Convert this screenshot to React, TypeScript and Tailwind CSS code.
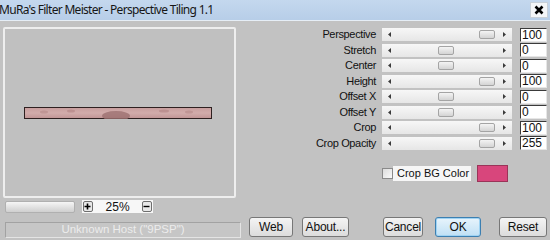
import React from "react";

const rows = [
  { label: "Perspective", max: true, value: "100" },
  { label: "Stretch", max: false, value: "0" },
  { label: "Center", max: false, value: "0" },
  { label: "Height", max: true, value: "100" },
  { label: "Offset X", max: false, value: "0" },
  { label: "Offset Y", max: false, value: "0" },
  { label: "Crop", max: true, value: "100" },
  { label: "Crop Opacity", max: true, value: "255" },
];

function Track({ max }: { max: boolean }) {
  return (
    <div className="relative w-[130px] h-[13px] bg-gradient-to-b from-[#f7f7f7] to-[#e6e6e6] flex items-center justify-between px-[6px]">
      <svg width="3" height="5" viewBox="0 0 3 5"><path d="M3 0 L0 2.5 L3 5 Z" fill="#3a3a3a" /></svg>
      <svg width="3" height="5" viewBox="0 0 3 5"><path d="M0 0 L3 2.5 L0 5 Z" fill="#3a3a3a" /></svg>
      <div
        className={
          "absolute top-[2px] w-[16px] h-[9px] rounded-[2px] border border-[#a4a4a4] bg-gradient-to-b from-[#f4f4f4] to-[#d4d4d4] " +
          (max ? "left-[97px]" : "left-[56px]")
        }
      />
    </div>
  );
}

function Btn({ children, ok, w }: { children: React.ReactNode; ok?: boolean; w: string }) {
  return (
    <div
      className={
        "h-[20px] flex items-center justify-center rounded-[3px] border text-[12px] text-[#111] tracking-[-0.2px] " +
        w +
        " " +
        (ok
          ? "border-[#3c7fb1] bg-gradient-to-b from-[#e8f4fc] to-[#bfe0f5] shadow-[inset_0_0_0_1px_#9fd3f3]"
          : "border-[#777] bg-gradient-to-b from-[#f4f4f4] to-[#dcdcdc]")
      }
    >
      {children}
    </div>
  );
}

export default function App() {
  return (
    <div
      className="w-[550px] h-[240px] bg-[#c2c2c2] flex flex-col overflow-hidden"
      style={{ fontFamily: '"Liberation Sans", Arial, sans-serif' }}
    >
      {/* title bar */}
      <div className="h-[20px] bg-gradient-to-b from-[#c4d8ee] to-[#b7cee8] flex items-center justify-between pr-[2px]">
        <span
          className="text-[12px] text-[#161616] leading-none -ml-[1px] tracking-[-0.7px] whitespace-nowrap"
          style={{ fontFamily: '"Noto Sans", "Open Sans", sans-serif' }}
        >
          MuRa's Filter Meister - Perspective Tiling 1.1
        </span>
        <div className="w-[18px] h-[16px] bg-[#f4f6f8] border border-[#c8d0d8] flex items-center justify-center">
          <svg width="10" height="10" viewBox="0 0 10 10">
            <path d="M1.5 1.5 L8.5 8.5 M8.5 1.5 L1.5 8.5" stroke="#000" strokeWidth="2.6" />
          </svg>
        </div>
      </div>
      <div className="h-[1px] bg-[#e6eef6]" />

      {/* main area */}
      <div className="flex h-[195px]">
        {/* left column */}
        <div className="w-[240px] pl-[3px] pt-[6px] flex flex-col">
          <div className="w-[233px] h-[171px] rounded-[2px] border-2 border-[#eeeeee] bg-[#c0c0c0] flex items-center justify-center">
            <svg width="188" height="12" viewBox="0 0 188 12" className="ml-[-4px]">
              <defs>
                <linearGradient id="g" x1="0" y1="0" x2="0" y2="1">
                  <stop offset="0" stopColor="#c79d9d" />
                  <stop offset="0.5" stopColor="#d2acab" />
                  <stop offset="1" stopColor="#c09494" />
                </linearGradient>
              </defs>
              <rect x="0.5" y="0.5" width="187" height="11" fill="url(#g)" stroke="#2e2020" />
              <ellipse cx="92" cy="9" rx="14" ry="5" fill="#9c7171" opacity="0.8" />
              <ellipse cx="47" cy="4" rx="4" ry="1.5" fill="#b08282" opacity="0.6" />
              <ellipse cx="140" cy="4" rx="5" ry="1.5" fill="#b08282" opacity="0.6" />
              <ellipse cx="165" cy="5" rx="4" ry="1.5" fill="#b08282" opacity="0.5" />
              <ellipse cx="20" cy="5" rx="4" ry="1.5" fill="#b08282" opacity="0.5" />
            </svg>
          </div>
          <div className="flex items-center mt-[2px] h-[13px]">
            <div className="ml-[2px] w-[70px] h-[12px] rounded-[2px] border border-[#b0b0b0] bg-gradient-to-b from-[#f6f6f6] to-[#cfcfcf]" />
            <div className="ml-[7px] w-[71px] h-[13px] bg-[#f7f7f7] flex items-center px-[1px]">
              <div className="w-[11px] h-[11px] border border-[#6e6e6e] rounded-[2px] bg-[#e8e8e8] flex items-center justify-center">
                <svg width="7" height="7" viewBox="0 0 7 7"><path d="M3.5 0.5 V6.5 M0.5 3.5 H6.5" stroke="#000" strokeWidth="1.6" /></svg>
              </div>
              <span className="ml-[13px] text-[12px] text-[#111] leading-none">25%</span>
              <div className="ml-[12px] w-[12px] h-[11px] border border-[#6e6e6e] rounded-[2px] bg-[#e8e8e8] flex items-center justify-center">
                <svg width="7" height="7" viewBox="0 0 7 7"><path d="M0.5 3.5 H6.5" stroke="#000" strokeWidth="1.4" /></svg>
              </div>
            </div>
          </div>
        </div>

        {/* right column */}
        <div className="flex-1 pt-[6px] flex flex-col">
          {rows.map((r) => (
            <div key={r.label} className="h-[15.5px] flex items-center">
              <div className="w-[136px] text-right text-[11px] text-[#111] leading-none tracking-[-0.35px] whitespace-nowrap">
                {r.label}
              </div>
              <div className="ml-[6px]">
                <Track max={r.max} />
              </div>
              <div className="ml-[8px] w-[27px] h-[14px] bg-white border border-[#3a3a3a] border-r-[#e6e6e6] border-b-[#e6e6e6] text-[12px] leading-[12px] pl-[1px] text-[#111]">
                {r.value}
              </div>
            </div>
          ))}
          <div className="flex items-center mt-[14px] h-[17px] ml-[142px]">
            <div className="w-[11px] h-[11px] border border-[#8a8a8a] bg-gradient-to-br from-[#dcdcdc] to-[#fafafa]" />
            <div className="w-[78px] h-[15px] bg-[#f6f6f6] flex items-center pl-[4px] text-[11px] text-[#111] leading-none whitespace-nowrap">
              Crop BG Color
            </div>
            <div className="ml-[6px] w-[31px] h-[17px] bg-[#d8467c] border border-[#9a3458]" />
          </div>
        </div>
      </div>

      {/* bottom row */}
      <div className="flex items-start mt-[1px]">
        <div className="ml-[5px] mt-[5px] w-[236px] h-[16px] bg-[#c6c6c6] border border-[#a2a2a2] border-r-[#e4e4e4] border-b-[#e4e4e4] flex items-center justify-center text-[11.5px] text-[#ececec] leading-none whitespace-nowrap">
          Unknown Host ("9PSP")
        </div>
        <div className="ml-[8px]">
          <Btn w="w-[44px]">Web</Btn>
        </div>
        <div className="ml-[9px]">
          <Btn w="w-[47px]">About...</Btn>
        </div>
        <div className="ml-[34px]">
          <Btn w="w-[40px]">Cancel</Btn>
        </div>
        <div className="ml-[12px]">
          <Btn w="w-[46px]" ok>
            OK
          </Btn>
        </div>
        <div className="ml-[18px]">
          <Btn w="w-[48px]">Reset</Btn>
        </div>
      </div>
    </div>
  );
}
